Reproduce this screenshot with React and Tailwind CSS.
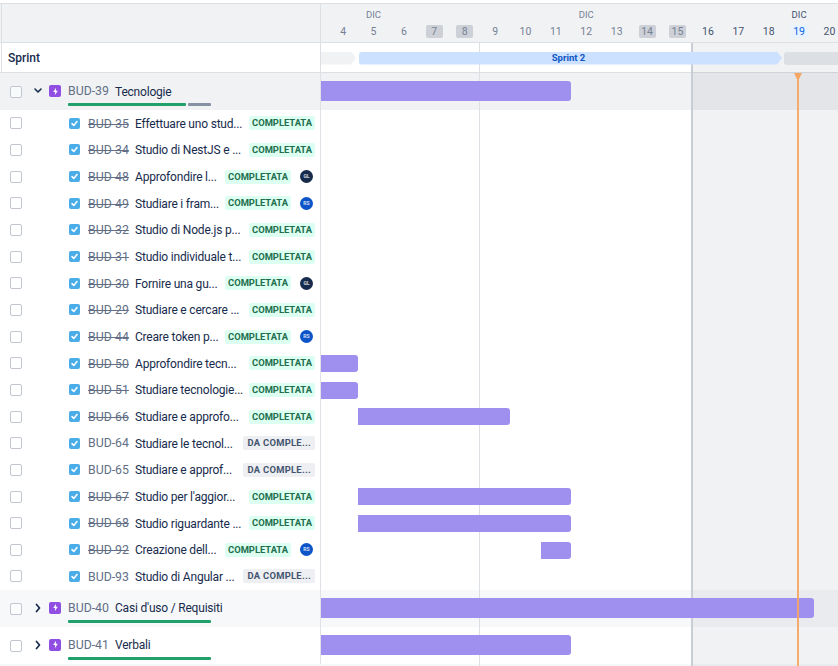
import React from "react";

const font = { fontFamily: 'Roboto,"Noto Sans",sans-serif' };

const Check = () => (
  <span className="w-[11px] h-[11px] rounded-[2px] bg-[#4bade8] flex items-center justify-center shrink-0">
    <svg width="9" height="9" viewBox="0 0 9 9" fill="none"><path d="M2 4.6 3.8 6.4 7 2.6" stroke="#fff" strokeWidth="1.5" strokeLinecap="round" strokeLinejoin="round" /></svg>
  </span>
);

const Box = () => <span className="block w-[12px] h-[12px] rounded-[2px] border-[1.5px] border-[#c1c7d0] bg-white/60 shrink-0" />;

const Epic = () => (
  <span className="w-[12px] h-[12px] rounded-[2px] bg-[#904ee2] flex items-center justify-center shrink-0">
    <svg width="7" height="9" viewBox="0 0 7 9"><path d="M4 .8 1.2 5h2L2.8 8.2 5.8 3.8h-2z" fill="#fff" /></svg>
  </span>
);

const Avatar = ({ t, dark }) => (
  <span className={`w-[13px] h-[13px] rounded-full flex items-center justify-center text-[5px] font-bold text-white/80 shrink-0 ml-[9px] mr-[2px] ${dark ? "bg-[#172b4d]" : "bg-[#0c54c7]"}`}>{t}</span>
);

const Status = ({ done }) =>
  done ? (
    <span className="h-[14px] px-[3px] rounded-[2px] bg-[#dcfff1] text-[#216e4e] text-[9.4px] font-bold leading-[14px] whitespace-nowrap">COMPLETATA</span>
  ) : (
    <span className="h-[14px] px-[4px] rounded-[2px] bg-[#eeeff2] text-[#44546f] text-[9.4px] font-bold leading-[14px] whitespace-nowrap tracking-[0.3px]">DA COMPLE...</span>
  );

const Bar = ({ from, to, top, h }) => (
  <div className="absolute z-10 bg-[#9f8fef] rounded-r-[3px]" style={{ left: from - 321, width: to - from, top, height: h }} />
);

const children = [
  ["BUD-35", "Effettuare uno stud...", 1],
  ["BUD-34", "Studio di NestJS e ...", 1],
  ["BUD-48", "Approfondire l...", 1, "GL", 1],
  ["BUD-49", "Studiare i fram...", 1, "RS", 0],
  ["BUD-32", "Studio di Node.js p...", 1],
  ["BUD-31", "Studio individuale t...", 1],
  ["BUD-30", "Fornire una gu...", 1, "GL", 1],
  ["BUD-29", "Studiare e cercare ...", 1],
  ["BUD-44", "Creare token p...", 1, "RS", 0],
  ["BUD-50", "Approfondire tecn...", 1, null, 0, [321, 358]],
  ["BUD-51", "Studiare tecnologie...", 1, null, 0, [321, 358]],
  ["BUD-66", "Studiare e approfo...", 1, null, 0, [358, 510]],
  ["BUD-64", "Studiare le tecnol...", 0],
  ["BUD-65", "Studiare e approf...", 0],
  ["BUD-67", "Studio per l'aggior...", 1, null, 0, [358, 571]],
  ["BUD-68", "Studio riguardante ...", 1, null, 0, [358, 571]],
  ["BUD-92", "Creazione dell...", 1, "RS", 0, [541, 571]],
  ["BUD-93", "Studio di Angular ...", 0],
];

const weeks = [
  ["", "", 4, 5, 6, 7, 8],
  [9, 10, 11, 12, 13, 14, 15],
  [16, 17, 18, 19, 20, "", ""],
];

function ChildRow({ k, title, done, av, dark, bar }) {
  return (
    <div className="flex h-[26.667px]">
      <div className="w-[321px] shrink-0 border-r border-[#dfe1e6] flex items-center pl-[9.5px] pr-[5px] bg-white relative z-30">
        <Box />
        <span className="ml-[47.5px]"><Check /></span>
        <span className={`ml-[8px] w-[47px] shrink-0 text-[12.3px] pt-[1px] text-[#626f86] ${done ? "line-through" : ""}`}>{k}</span>
        <span className="text-[12px] tracking-[-0.2px] pt-[1px] text-[#172b4d] whitespace-nowrap flex-1">{title}</span>
        <Status done={done} />
        {av && <Avatar t={av} dark={dark} />}
      </div>
      <div className="flex-1 relative">{bar && <Bar from={bar[0]} to={bar[1]} top={5} h={17} />}</div>
    </div>
  );
}

function GroupRow({ k, title, open, bg, rightBg, to, gray }) {
  return (
    <div className={`flex h-[37px] shrink-0 ${rightBg}`}>
      <div className={`w-[321px] shrink-0 border-r border-[#dfe1e6] flex items-start pl-[9.5px] relative z-30 ${bg}`}>
        <span className="mt-[13px]"><Box /></span>
        <svg className="ml-[10.5px] mt-[13px]" width="12" height="10" viewBox="0 0 12 10" fill="none">
          {open ? <path d="M3 3 6 6 9 3" stroke="#172b4d" strokeWidth="1.6" strokeLinecap="round" strokeLinejoin="round" /> : <path d="M4.5 1.5 7.5 5 4.5 8.5" stroke="#172b4d" strokeWidth="1.7" strokeLinecap="round" strokeLinejoin="round" />}
        </svg>
        <span className="ml-[5px] mt-[12px]"><Epic /></span>
        <div className="ml-[7px] flex flex-col">
          <div className="flex mt-[9px] h-[18px] items-center">
            <span className="w-[47px] text-[12.3px] pt-[1px] text-[#626f86]">{k}</span>
            <span className="text-[12px] tracking-[-0.2px] pt-[1px] text-[#172b4d] whitespace-nowrap">{title}</span>
          </div>
          <div className="flex gap-[2px] mt-[3px]">
            <span className={`h-[3px] rounded-[1px] bg-[#22a06b] ${gray ? "w-[118px]" : "w-[143px]"}`} />
            {gray && <span className="h-[3px] w-[23px] rounded-[1px] bg-[#8590a2]" />}
          </div>
        </div>
      </div>
      <div className="flex-1 relative"><Bar from={321} to={to} top={8} h={20} /></div>
    </div>
  );
}

export default function App() {
  return (
    <div className="relative w-[838px] h-[666px] overflow-hidden bg-white pt-[3px] flex flex-col" style={font}>
      {/* timeline overlays */}
      <div className="absolute left-[692px] top-[3px] bottom-0 right-0 bg-[#091e42]/[0.06] z-0" />
      <div className="absolute left-[479px] top-[3px] bottom-0 w-px bg-[#dcdfe4] z-0" />
      <div className="absolute left-[691px] top-[3px] bottom-0 w-[2px] bg-[#c9ced6] z-0" />
      <div className="absolute left-[796.5px] top-[73px] bottom-0 w-[2px] bg-[#f5a55f]/90 z-20" />
      <svg className="absolute left-[793.5px] top-[73px] z-20" width="8" height="6" viewBox="0 0 8 6"><path d="M0 0h8L5 6H3z" fill="#f5a55f" /></svg>

      {/* header */}
      <div className="flex h-[40px] shrink-0 border-y border-[#dcdfe4] bg-[#f1f2f4] relative">
        <div className="w-[320px] shrink-0 ml-px border-r border-l border-[#dcdfe4] bg-[#f1f2f4] z-30" />
        <div className="flex-1 overflow-hidden relative">
          <div className="flex -ml-[53.9px] relative z-10">
            {weeks.map((w, i) => (
              <div key={i} className="w-[212.8px] shrink-0 flex flex-col items-center">
                <span className={`text-[9.5px] leading-[12px] mt-[5px] ${i === 2 ? "text-[#44546f]" : "text-[#758195]"}`}>DIC</span>
                <div className="flex w-full mt-[4px]">
                  {w.map((d, j) => (
                    <span key={j} className="w-[30.4px] flex justify-center">
                      {d !== "" && (
                        <span className={`w-[17px] h-[13px] rounded-[2px] flex items-center justify-center text-[10.5px] ${d === 19 ? "bg-[#e9f2ff] text-[#0c66e4]" : i === 2 ? "text-[#44546f]" : j > 4 ? "bg-[#cdd0d6] text-[#758195]" : "text-[#758195]"}`}>{d}</span>
                      )}
                    </span>
                  ))}
                </div>
              </div>
            ))}
          </div>
        </div>
      </div>

      {/* sprint row */}
      <div className="flex h-[30px] shrink-0 border-b border-[#dcdfe4]">
        <div className="w-[320px] shrink-0 ml-px border-x border-[#dcdfe4] flex items-center pl-[6px] bg-white z-30">
          <span className="text-[12px] pt-[1px] font-medium text-[#172b4d]">Sprint</span>
        </div>
        <div className="flex-1 flex items-center gap-[3px] -ml-[40px] overflow-hidden z-10 pt-[1px]">
          <div className="w-[75px] h-[13px] shrink-0 bg-[#f1f2f4] [clip-path:polygon(0_0,calc(100%-5px)_0,100%_50%,calc(100%-5px)_100%,0_100%)]" />
          <div className="w-[423px] h-[13px] shrink-0 pr-[4px] bg-[#cce0ff] rounded-l-[3px] text-[#0c55c5] text-[9.5px] font-bold flex items-center justify-center [clip-path:polygon(0_0,calc(100%-5px)_0,100%_50%,calc(100%-5px)_100%,0_100%)]">Sprint 2</div>
          <div className="w-[60px] h-[13px] shrink-0 bg-[#dcdfe4] rounded-l-[3px] -ml-[1px]" />
        </div>
      </div>

      <GroupRow k="BUD-39" title="Tecnologie" open gray bg="bg-[#f1f2f4]" rightBg="bg-[#f1f2f4]" to={571} />
      {children.map((c) => (
        <ChildRow key={c[0]} k={c[0]} title={c[1]} done={!!c[2]} av={c[3]} dark={!!c[4]} bar={c[5]} />
      ))}
      <GroupRow k="BUD-40" title="Casi d'uso / Requisiti" bg="bg-[#f7f8f9]" rightBg="bg-[#f7f8f9]" to={814} />
      <GroupRow k="BUD-41" title="Verbali" bg="bg-white" rightBg="bg-white" to={571} />
      <div className="flex-1 bg-[#f7f8f9]" />
    </div>
  );
}
